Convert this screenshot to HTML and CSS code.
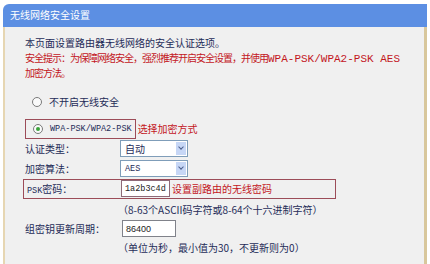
FILE: index.html
```html
<!DOCTYPE html>
<html lang="zh-CN">
<head>
    <meta charset="UTF-8">
    <title>无线网络安全设置</title>
    <link rel="stylesheet" href="styles.css">
</head>
<body>

    <div class="panel">
        <div class="title">无线网络安全设置</div>
        <div class="content">
            <div class="intro">
                <p>本页面设置路由器无线网络的安全认证选项。</p>
                <p class="warn">安全提示：为保障网络安全，强烈推荐开启安全设置，并使用<span class="mono">WPA-PSK/WPA2-PSK AES</span></p>
                <p class="warn">加密方法。</p>
            </div>

            <div class="radio-row">
                <span class="radio"></span>
                <span>不开启无线安全</span>
            </div>

            <div class="radio-row second">
                <span class="mark-box">
                    <span class="radio checked"></span>
                    <span class="mono small">WPA-PSK/WPA2-PSK</span>
                </span>
                <span class="note">选择加密方式</span>
            </div>

            <div class="field">
                <span class="label">认证类型：</span>
                <span class="select"><span class="value">自动</span><span class="arrow"></span></span>
            </div>
            <div class="field">
                <span class="label">加密算法：</span>
                <span class="select"><span class="value mono small">AES</span><span class="arrow"></span></span>
            </div>

            <div class="field psk">
                <span class="label"><span class="mono small">PSK</span>密码：</span>
                <span class="input pass mono small">1a2b3c4d</span>
                <span class="note">设置副路由的无线密码</span>
            </div>
            <div class="hint">（8-63个ASCII码字符或8-64个十六进制字符）</div>

            <div class="field group">
                <span class="label">组密钥更新周期：</span>
                <span class="input period">86400</span>
            </div>
            <div class="hint">（单位为秒，最小值为30，不更新则为0）</div>
        </div>
    </div>

</body>
</html>
```

FILE: styles.css
```css
body {
    margin: 0;
    background-color: #fff;
    font-family: "Noto Sans CJK SC", "Liberation Sans", sans-serif;
    font-size: 10px;
    color: #1f2c58;
    height: 264px;
    overflow: hidden;
    white-space: nowrap;
}

p {
    margin: 0;
}

.mono {
    font-family: "Liberation Mono", monospace;
    font-size: 11px;
    letter-spacing: 0;
}

.mono.small {
    font-size: 8.5px;
}

.panel {
    margin: 4px 3px 0 3px;
    width: 424px;
}

.title {
    height: 23px;
    line-height: 22px;
    padding-left: 7px;
    background-color: #5c8fe3;
    border-top-left-radius: 6px;
    color: #fff;
    font-size: 10px;
}

.content {
    height: 240px;
    background-color: #f0f0f0;
    border-left: 2px solid #e6d6b2;
    border-right: 3px solid #d8c79c;
    padding-left: 20px;
}

.intro {
    padding-top: 9px;
    line-height: 14.5px;
}

.warn {
    color: #c3161d;
    letter-spacing: -1px;
}

.radio-row {
    display: flex;
    align-items: center;
    height: 18px;
    margin-top: 12px;
    padding-left: 7px;
}

.radio-row.second {
    height: 20px;
    margin-top: 8px;
    padding-left: 0;
}

.radio {
    flex: none;
    width: 8px;
    height: 8px;
    border: 1px solid #7a7a7a;
    border-radius: 50%;
    background-color: #fafafa;
    margin-right: 7px;
    position: relative;
}

.radio.checked::after {
    content: "";
    position: absolute;
    left: 2px;
    top: 2px;
    width: 4px;
    height: 4px;
    border-radius: 50%;
    background-color: #3aa33a;
}

.mark-box {
    display: flex;
    align-items: center;
    height: 18px;
    padding: 0 3px 0 7px;
    border: 1px solid #9c4c58;
}

.note {
    color: #c3161d;
    margin-left: 2px;
}

.field {
    display: flex;
    align-items: center;
    height: 20px;
}

.label {
    width: 95px;
    flex: none;
}

.select {
    display: flex;
    align-items: center;
    width: 66px;
    height: 15px;
    border: 1px solid #7f9db9;
    background-color: #fff;
}

.select .value {
    flex: 1;
    padding-left: 4px;
}

.arrow {
    width: 10px;
    height: 13px;
    margin-right: 1px;
    background-color: #c7d7f6;
    position: relative;
}

.arrow::after {
    content: "";
    position: absolute;
    left: 3px;
    top: 3px;
    width: 3px;
    height: 3px;
    border-right: 1.5px solid #4b5f8c;
    border-bottom: 1.5px solid #4b5f8c;
    transform: rotate(45deg);
}

.psk {
    width: 308px;
    height: 18px;
    margin-left: -2px;
    padding-left: 3px;
    border: 1px solid #9c4c58;
}

.psk .label {
    width: 94px;
}

.input {
    display: flex;
    align-items: center;
    height: 15px;
    border: 1px solid #80828a;
    background-color: #fff;
    padding-left: 3px;
    color: #222;
}

.pass {
    width: 44px;
    border-color: #8d6a78;
}

.period {
    width: 49px;
    font-family: "Liberation Sans", sans-serif;
    font-size: 9px;
}

.hint {
    height: 14px;
    line-height: 14px;
    margin-top: 4px;
    padding-left: 93px;
}

.group {
    height: 18px;
    margin-top: 3px;
}

.group .input {
    margin-left: 2px;
}

.group + .hint {
    margin-top: 3px;
}
```
